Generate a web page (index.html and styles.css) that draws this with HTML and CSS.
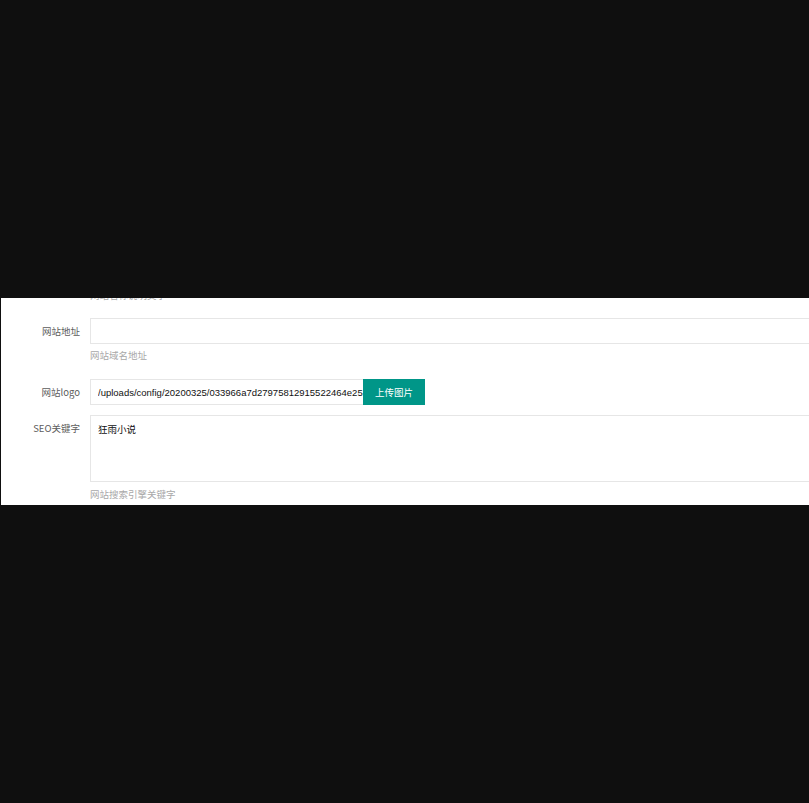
FILE: index.html
```html
<!DOCTYPE html>
<html>
<head>
<meta charset="utf-8">
<link rel="stylesheet" href="styles.css">
</head>
<body>
<div class="panel">
  <div class="aux clip">网站名称说明文字</div>
  <div class="item first">
    <label class="label mid">网站地址</label>
    <div class="block">
      <input class="input" type="text" value="">
      <div class="aux">网站域名地址</div>
    </div>
  </div>
  <div class="item second">
    <label class="label mid">网站logo</label>
    <div class="block inline">
      <input class="input short" type="text" value="/uploads/config/20200325/033966a7d27975812915522464e2526d.png">
      <button class="btn">上传图片</button>
    </div>
  </div>
  <div class="item third">
    <label class="label top">SEO关键字</label>
    <div class="block">
      <textarea class="textarea">狂雨小说</textarea>
      <div class="aux">网站搜索引擎关键字</div>
    </div>
  </div>
</div>
</body>
</html>
```
FILE: styles.css
```css
html, body {
  margin: 0;
  padding: 0;
  background: #0f0f0f;
  overflow: hidden;
}
.panel {
  margin-top: 298px;
  margin-left: 1px;
  height: 207px;
  background: #fff;
  overflow: hidden;
  font-family: "Liberation Sans", "Noto Sans CJK SC", sans-serif;
  font-size: 9.5px;
  color: #666;
}
.aux {
  font-family: "Noto Sans CJK SC", sans-serif;
  color: #a8a8a8;
  line-height: 14px;
  height: 14px;
}
.clip {
  margin-top: -10px;
  margin-left: 89px;
}
.item {
  display: flex;
  align-items: flex-start;
  margin-right: -2px;
}
.first { margin-top: 16px; }
.second { margin-top: 17px; }
.third { margin-top: 10px; }
.label {
  width: 79px;
  padding-right: 10px;
  text-align: right;
  font-family: "Noto Sans CJK SC", sans-serif;
  color: #5c5c5c;
  flex: none;
}
.label.mid { line-height: 26px; height: 26px; }
.label.top { line-height: 14px; padding-top: 6px; }
.block {
  flex: 1;
  min-width: 0;
  display: flex;
  flex-direction: column;
}
.block.inline { flex-direction: row; }
.block .aux { margin-top: 4px; }
.third .block .aux { margin-top: 5px; }
.input {
  box-sizing: border-box;
  height: 26px;
  width: 100%;
  margin: 0;
  border: 1px solid #e6e6e6;
  padding: 0 7px;
  font-family: "Liberation Sans", "Noto Sans CJK SC", sans-serif;
  font-size: 9.5px;
  color: #111;
  background: #fff;
  outline: none;
}
.input.short {
  width: 273px;
  padding-right: 0;
  border-right: none;
  flex: none;
}
.btn {
  box-sizing: border-box;
  width: 62px;
  height: 26px;
  margin: 0;
  border: none;
  padding: 0;
  background: #009688;
  color: #fff;
  font-family: "Noto Sans CJK SC", sans-serif;
  font-size: 9.5px;
  flex: none;
}
.textarea {
  box-sizing: border-box;
  display: block;
  width: 100%;
  height: 67px;
  margin: 0;
  border: 1px solid #e6e6e6;
  padding: 6px 7px;
  line-height: 14px;
  font-family: "Noto Sans CJK SC", sans-serif;
  font-size: 9.5px;
  color: #111;
  resize: none;
  outline: none;
}
```
